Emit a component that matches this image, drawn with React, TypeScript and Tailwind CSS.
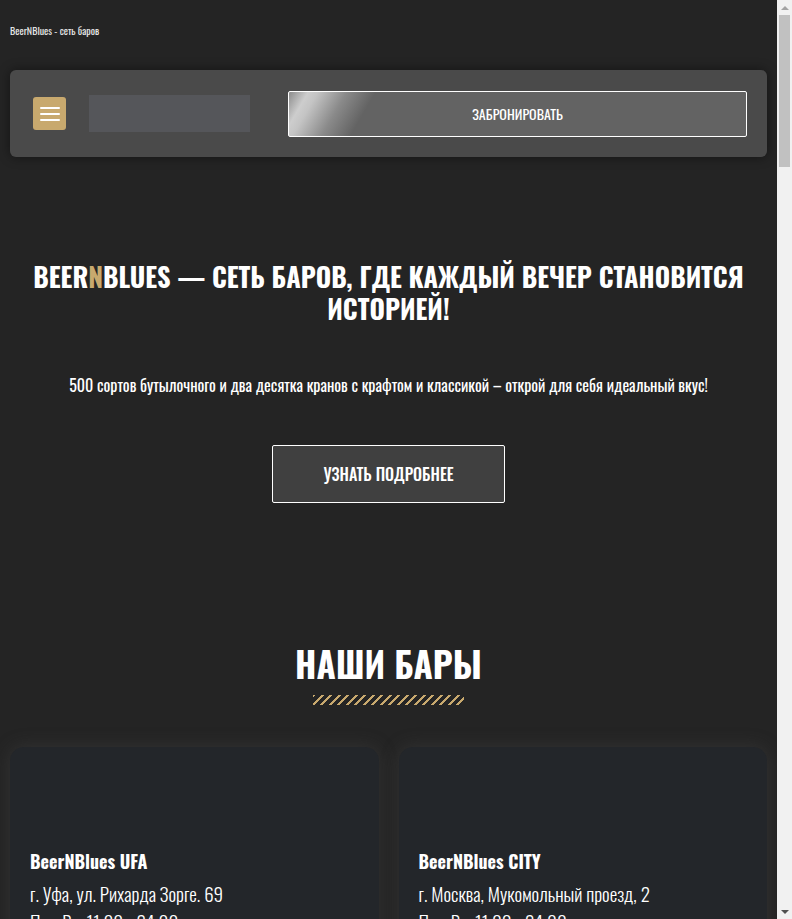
const bars = [
  { name: "BeerNBlues UFA", address: "г. Уфа, ул. Рихарда Зорге. 69", hours: "Пн - Вс: 11:00 - 24:00" },
  { name: "BeerNBlues CITY", address: "г. Москва, Мукомольный проезд, 2", hours: "Пн - Вс: 11:00 - 24:00" },
];

const font = "font-['Oswald','Liberation_Sans_Narrow','DejaVu_Sans_Condensed',sans-serif]";

function Header() {
  return (
    <div className="mx-[10px] h-[87px] rounded-md bg-[#4a4a4a] shadow-[0_0_12px_rgba(0,0,0,0.45)] flex items-center pl-[23px] pr-[20px]">
      <button className="w-[33px] h-[33px] rounded-[3px] bg-[#c8a96e] flex flex-col items-center justify-center gap-[4px]">
        <span className="block w-[20px] h-[2px] rounded-full bg-white" />
        <span className="block w-[20px] h-[2px] rounded-full bg-white" />
        <span className="block w-[20px] h-[2px] rounded-full bg-white" />
      </button>
      <div className="ml-[23px] w-[161px] h-[37px] bg-[#55565a]" />
      <button className="ml-[38px] flex-1 h-[46px] border border-white rounded-[2px] text-white text-[14px] font-normal bg-[linear-gradient(120deg,#8c8c8c_0%,#cdcdcd_4%,#c4c4c4_6%,#8a8a8a_12%,#636363_18%,#636363_100%)]">
        ЗАБРОНИРОВАТЬ
      </button>
    </div>
  );
}

function BarCard({ bar }: { bar: (typeof bars)[number] }) {
  return (
    <div className="rounded-[14px] bg-[#23262a] shadow-[0_0_18px_rgba(70,70,70,0.45)] px-[20px] pt-[102px] pb-[30px] text-white">
      <h3 className="text-[18px] font-bold leading-[24px]">{bar.name}</h3>
      <p className="mt-[6px] text-[19px] leading-[28px] font-light">{bar.address}</p>
      <p className="text-[19px] leading-[28px] font-light">{bar.hours}</p>
      <div className="mt-[16px] h-[160px]" />
    </div>
  );
}

function Scrollbar() {
  return (
    <div className="w-[15px] shrink-0 h-screen sticky top-0 bg-[#f1f1f1] flex flex-col items-center">
      <div className="h-[15px] flex items-center justify-center">
        <div className="w-0 h-0 border-x-[4px] border-x-transparent border-b-[4px] border-b-[#a3a3a3]" />
      </div>
      <div className="w-[11px] h-[152px] bg-[#c1c1c1]" />
      <div className="flex-1" />
      <div className="h-[15px] flex items-center justify-center">
        <div className="w-0 h-0 border-x-[4px] border-x-transparent border-t-[4px] border-t-[#505050]" />
      </div>
    </div>
  );
}

export default function App() {
  return (
    <div className={`${font} flex items-start bg-[#242424]`}>
      <div className="flex-1 min-w-0 text-white pb-10">
        <div className="h-[70px] px-[10px] pt-[24px] text-[10px] leading-[14px] text-[#e6e6e6]">
          BeerNBlues - сеть баров
        </div>
        <Header />

        {/* Hero */}
        <section className="pt-[104px] px-[20px] text-center">
          <h1 className="text-[26.4px] leading-[32px] font-bold uppercase">
            Beer<span className="text-[#c8a96e]">N</span>Blues — сеть баров, где каждый вечер становится
            <br />
            историей!
          </h1>
          <p className="mt-[50px] text-[16px] leading-[20px] font-normal">
            500 сортов бутылочного и два десятка кранов с крафтом и классикой – открой для себя идеальный вкус!
          </p>
          <button className="mt-[50px] w-[233px] h-[58px] border border-white rounded-[2px] bg-[#404040] text-[16px] font-medium uppercase">
            Узнать подробнее
          </button>
        </section>

        {/* Bars */}
        <section className="pt-[138px] px-[10px]">
          <h2 className="text-center text-[35px] leading-[44px] font-bold uppercase">Наши бары</h2>
          <div className="mx-auto mt-[10px] w-[151px] h-[10px] bg-[repeating-linear-gradient(135deg,#c8a96e_0_2px,transparent_2px_6px)]" />
          <div className="mt-[42px] grid grid-cols-2 gap-[20px]">
            {bars.map((b) => (
              <BarCard key={b.name} bar={b} />
            ))}
          </div>
        </section>
      </div>
      <Scrollbar />
    </div>
  );
}
